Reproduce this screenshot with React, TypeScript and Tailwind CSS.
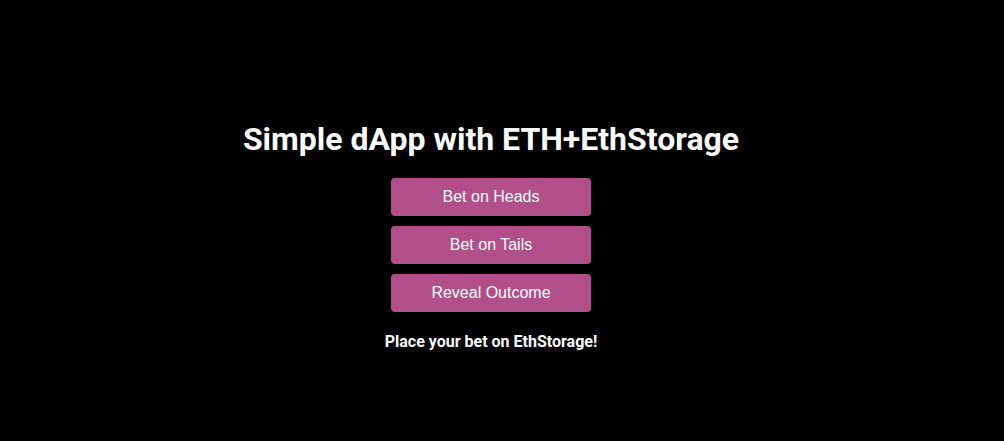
export default function App() {
  return (
    <div className="min-h-[441px] w-full bg-black flex flex-col items-center justify-center text-white pt-[30px] pr-[22px]">
      <h1 className="text-[32px] font-bold leading-[40px] mb-[19px] font-['Roboto',sans-serif]">
        Simple dApp with ETH+EthStorage
      </h1>
      <div className="flex flex-col gap-[10px]">
        {["Bet on Heads", "Bet on Tails", "Reveal Outcome"].map((t) => (
          <button
            key={t}
            className="w-[200px] h-[38px] rounded-[4px] bg-[#b04f8a] text-white text-[16px] font-['Liberation_Sans',Arial,sans-serif]"
          >
            {t}
          </button>
        ))}
      </div>
      <p className="mt-[20px] text-[16px] font-bold leading-[20px] font-['Roboto',sans-serif]">
        Place your bet on EthStorage!
      </p>
    </div>
  );
}
